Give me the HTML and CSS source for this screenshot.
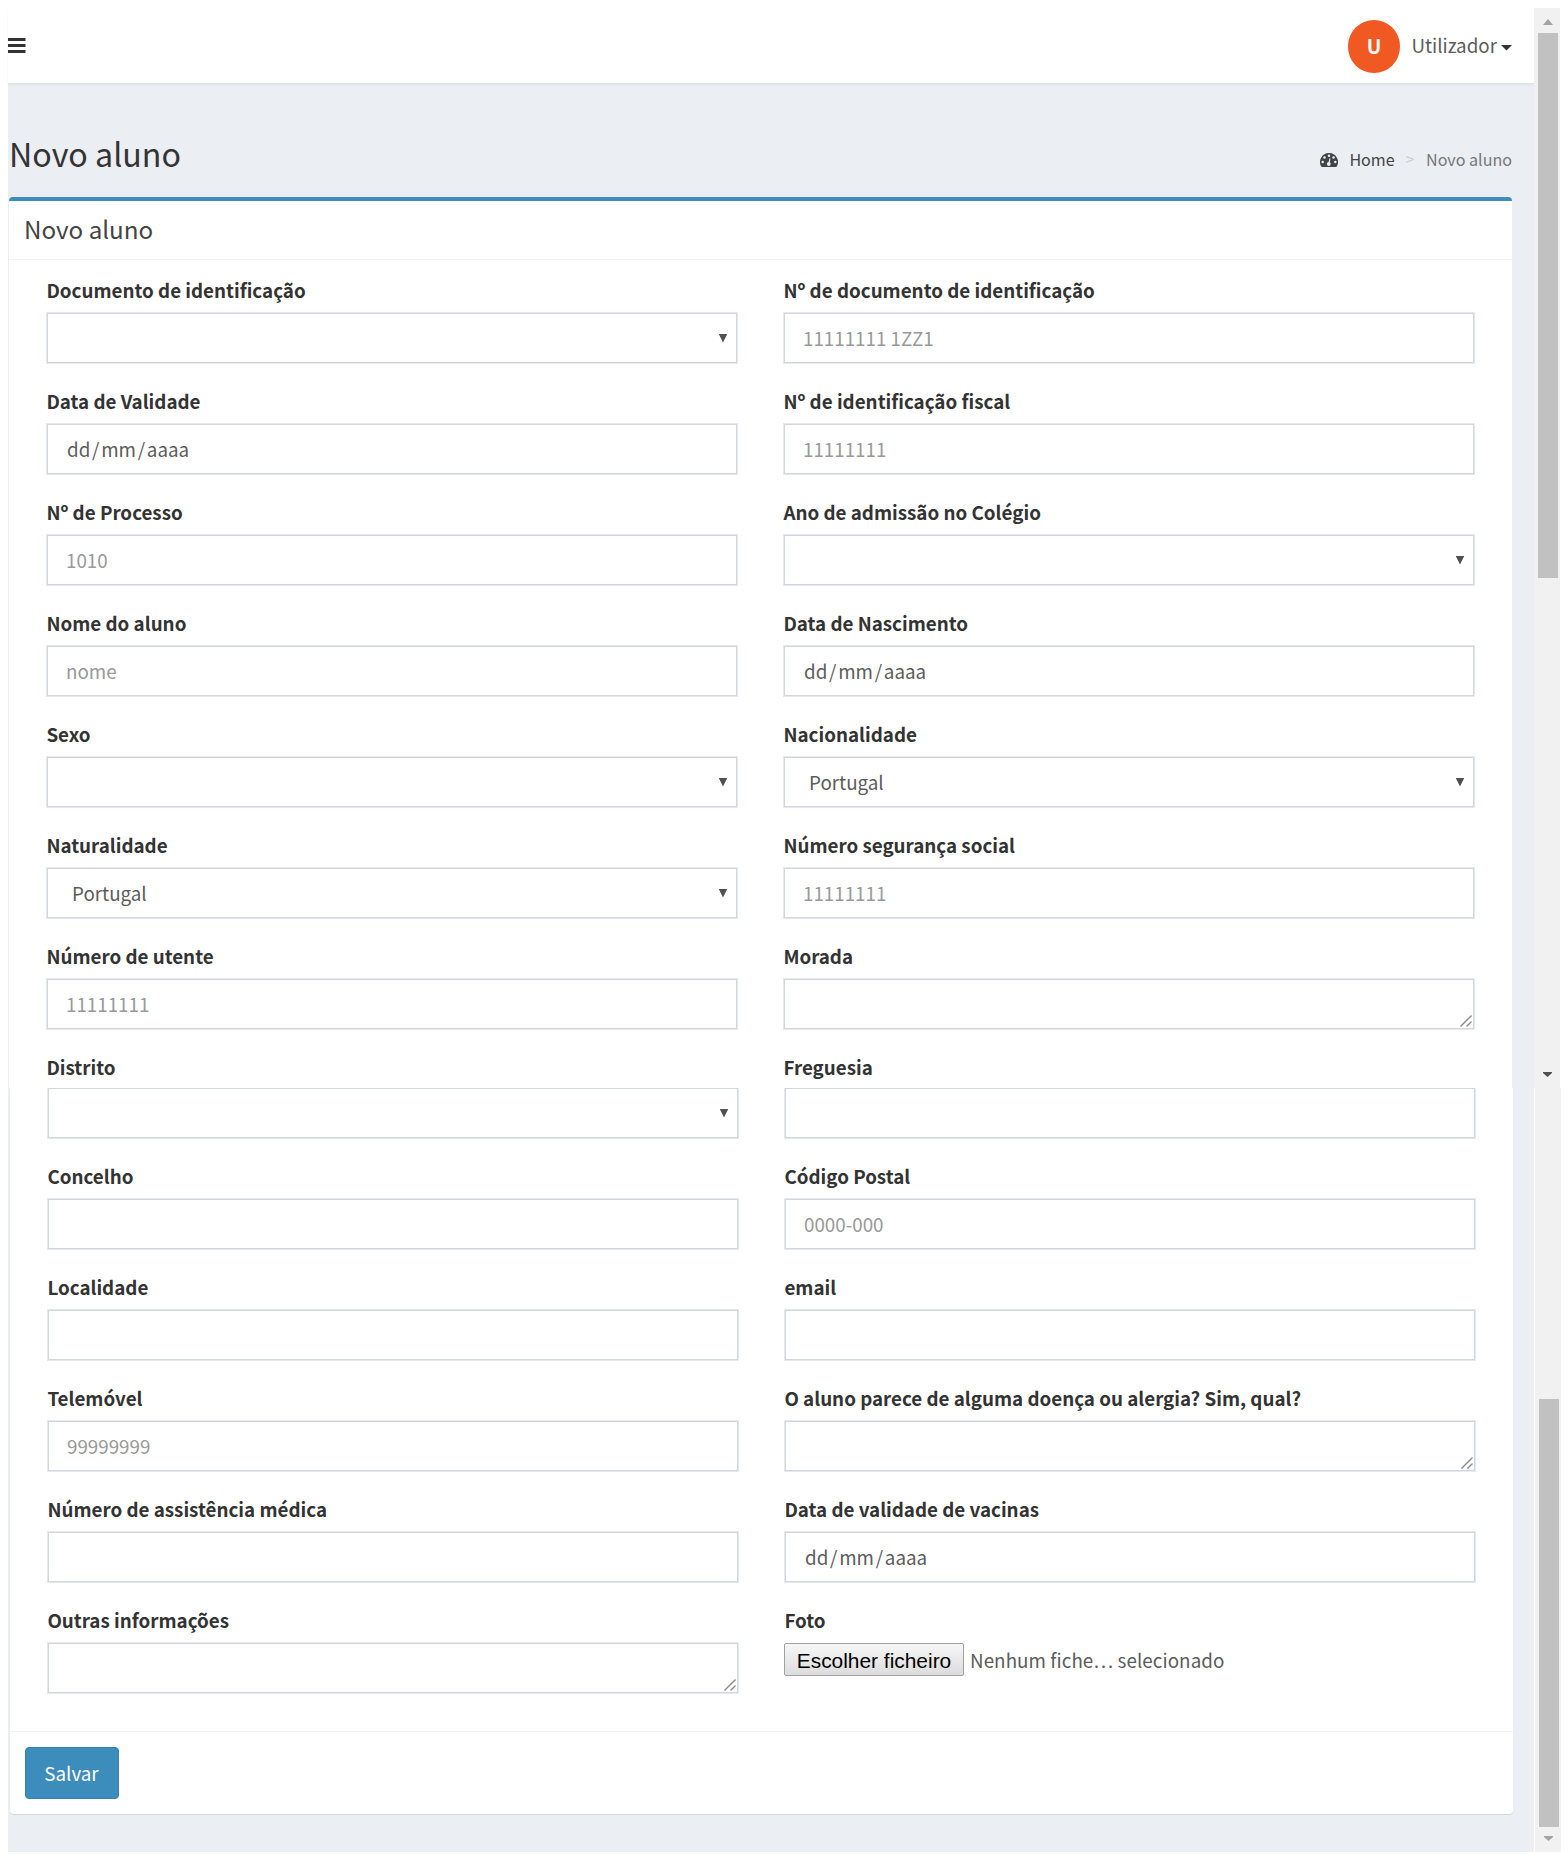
FILE: index.html
```html
<!DOCTYPE html>
<html lang="pt">
<head>
<meta charset="utf-8">
<title>Novo aluno</title>
<link rel="stylesheet" href="styles.css">
</head>
<body>
<div class="app">
  <div class="main">
    <header class="topbar">
      <svg class="menu" width="18" height="15" viewBox="0 0 18 15"><path d="M0 0h17.500v3H0zM0 6h17.500v3H0zM0 12h17.500v3H0z"/></svg>
      <div class="user">
        <span class="avatar">U</span>
        <span class="user-name">Utilizador</span>
        <svg class="caret" width="11" height="6" viewBox="0 0 11 6"><path d="M0 0h11L5.5 5.6z"/></svg>
      </div>
    </header>
    <div class="page-head">
      <h1>Novo aluno</h1>
      <nav class="crumbs">
        <svg class="gauge" width="18" height="14" viewBox="0 0 18 14"><path d="M9 0a9 9 0 0 0-7.6 13.8l.6.2h14l.6-.2A9 9 0 0 0 9 0z" fill="#444"/><g fill="#ebeef3"><circle cx="2.7" cy="9" r="1.25"/><circle cx="4.5" cy="4.6" r="1.25"/><circle cx="9" cy="2.7" r="1.25"/><circle cx="13.5" cy="4.6" r="1.25"/><circle cx="15.3" cy="9" r="1.25"/><circle cx="8.8" cy="11" r="1.9"/><path d="M8.2 10.5l1.3-5.3 1 .3-1 5.3z"/></g></svg>
        <span class="home">Home</span><span class="sep">&gt;</span><span class="here">Novo aluno</span>
      </nav>
    </div>
    <section class="box box-top">
      <h2>Novo aluno</h2>
      <div class="rows">
        <div class="row">
          <div class="field"><label>Documento de identificação</label><div class="control select"></div></div>
          <div class="field"><label>Nº de documento de identificação</label><div class="control hint">11111111 1ZZ1</div></div>
        </div>
        <div class="row">
          <div class="field"><label>Data de Validade</label><div class="control date">dd<span class="slash">/</span>mm<span class="slash">/</span>aaaa</div></div>
          <div class="field"><label>Nº de identificação fiscal</label><div class="control hint">11111111</div></div>
        </div>
        <div class="row">
          <div class="field"><label>Nº de Processo</label><div class="control hint">1010</div></div>
          <div class="field"><label>Ano de admissão no Colégio</label><div class="control select"></div></div>
        </div>
        <div class="row">
          <div class="field"><label>Nome do aluno</label><div class="control hint">nome</div></div>
          <div class="field"><label>Data de Nascimento</label><div class="control date">dd<span class="slash">/</span>mm<span class="slash">/</span>aaaa</div></div>
        </div>
        <div class="row">
          <div class="field"><label>Sexo</label><div class="control select"></div></div>
          <div class="field"><label>Nacionalidade</label><div class="control select">Portugal</div></div>
        </div>
        <div class="row">
          <div class="field"><label>Naturalidade</label><div class="control select">Portugal</div></div>
          <div class="field"><label>Número segurança social</label><div class="control hint">11111111</div></div>
        </div>
        <div class="row">
          <div class="field"><label>Número de utente</label><div class="control hint">11111111</div></div>
          <div class="field"><label>Morada</label><div class="control area"><svg class="grip" width="12" height="12" viewBox="0 0 12 12"><path d="M.5 11.5l11-11M6.500 11.500l5-5"/></svg></div></div>
        </div>
        <div class="row row-labels">
          <label>Distrito</label>
          <label>Freguesia</label>
        </div>
      </div>
    </section>
    <section class="box box-bottom">
      <div class="rows">
        <div class="row row-cut">
          <div class="control select"></div>
          <div class="control"></div>
        </div>
        <div class="row">
          <div class="field"><label>Concelho</label><div class="control"></div></div>
          <div class="field"><label>Código Postal</label><div class="control hint">0000-000</div></div>
        </div>
        <div class="row">
          <div class="field"><label>Localidade</label><div class="control"></div></div>
          <div class="field"><label>email</label><div class="control"></div></div>
        </div>
        <div class="row">
          <div class="field"><label>Telemóvel</label><div class="control hint">99999999</div></div>
          <div class="field"><label>O aluno parece de alguma doença ou alergia? Sim, qual?</label><div class="control area"><svg class="grip" width="12" height="12" viewBox="0 0 12 12"><path d="M.5 11.5l11-11M6.500 11.500l5-5"/></svg></div></div>
        </div>
        <div class="row">
          <div class="field"><label>Número de assistência médica</label><div class="control"></div></div>
          <div class="field"><label>Data de validade de vacinas</label><div class="control date">dd<span class="slash">/</span>mm<span class="slash">/</span>aaaa</div></div>
        </div>
        <div class="row">
          <div class="field"><label>Outras informações</label><div class="control area"><svg class="grip" width="12" height="12" viewBox="0 0 12 12"><path d="M.5 11.5l11-11M6.500 11.500l5-5"/></svg></div></div>
          <div class="field"><label>Foto</label><div class="file"><span class="file-button">Escolher ficheiro</span><span class="file-name">Nenhum fiche… selecionado</span></div></div>
        </div>
      </div>
      <footer><button class="save">Salvar</button></footer>
    </section>
  </div>
  <aside class="scroll">
    <div class="track track-top">
      <svg class="up" width="10" height="6" viewBox="0 0 10 6"><path d="M0 6h10L5 0z"/></svg>
      <div class="thumb"></div>
      <svg class="down" width="9" height="5" viewBox="0 0 9 5"><path d="M0 0h9v1L4.500 5 0 1z"/></svg>
    </div>
    <div class="track track-bottom">
      <div class="thumb"></div>
      <svg class="down" width="9" height="5" viewBox="0 0 9 5"><path d="M0 0h9v1L4.500 5 0 1z"/></svg>
    </div>
  </aside>
</div>
</body>
</html>
```
FILE: styles.css
```css
* { box-sizing: border-box; }
body {
  margin: 0;
  padding: 8px 7px 2px 8px;
  background: #fff;
  color: #333;
  font-family: "Noto Sans CJK JP", "Noto Sans CJK SC", sans-serif;
  font-size: 18.8px;
}
svg { display: block; flex: none; }
.app { display: flex; height: 1844px; }
.main { width: 1526px; background: #ebeef3; }

.topbar {
  display: flex;
  justify-content: space-between;
  align-items: flex-start;
  height: 75px;
  background: #fff;
  box-shadow: 0 2px 2px rgba(0, 0, 0, .05);
}
.menu { margin-top: 30px; fill: #333; }
.user { display: flex; align-items: center; margin: 12px 22px 0 0; }
.avatar {
  width: 52.5px;
  height: 52.5px;
  border-radius: 50%;
  background: #f05a22;
  color: #fff;
  font-weight: 700;
  font-size: 19.5px;
  line-height: 51px;
  text-align: center;
}
.user-name { margin-left: 11px; line-height: 48px; padding-bottom: 3px; color: #5c5c5c; }
.caret { margin: 4px 0 0 4px; fill: #333; }

.page-head { display: flex; justify-content: space-between; height: 114px; padding: 48px 22px 0 1px; }
h1 { margin: 0; font-size: 32.2px; font-weight: 400; line-height: 44px; }
.crumbs { display: flex; font-size: 16.1px; line-height: 56px; color: #444; }
.gauge { margin: 22px 11px 0 0; }
.sep { margin: 0 12px 0 11px; color: #ccc; font-size: 15px; }
.here { color: #777; }

.box { width: 1503px; background: #fff; box-shadow: 0 1px 1px rgba(0, 0, 0, .1); }
.box-top { height: 891px; margin-left: 1px; border-top: 4px solid #3c8dbc; border-radius: 4px 4px 0 0; box-shadow: none; }
.box-bottom { height: 726px; margin-left: 2px; border-radius: 0 0 4px 4px; }
h2 {
  height: 59px;
  margin: 0;
  padding-left: 15px;
  border-bottom: 1px solid #f4f4f4;
  font-size: 24.2px;
  font-weight: 400;
  line-height: 55px;
  color: #444;
}
.rows { padding-left: 37px; }
.box-top .rows { padding-top: 19px; }
.row { display: grid; grid-template-columns: 692px 692px; column-gap: 45px; height: 111px; }
.row-labels { height: 32px; }
.row-cut { height: 77px; }
label { display: block; height: 33px; padding-left: .4px; font-weight: 700; line-height: 22px; white-space: nowrap; }
.control {
  position: relative;
  height: 52px;
  border: 1px solid #e5e8ed;
  box-shadow: inset 0 0 0 1px #d2d6de;
  line-height: 50px;
  padding-left: 19px;
  color: #5c5c5c;
}
.row-cut .control { height: 51px; border-top: 0; }
.hint { color: #999; }
.date { padding-left: 20px; }
.slash { margin: 0 1.75px; }
.select { padding-left: 25px; }
.select::after {
  content: "";
  position: absolute;
  right: 9.5px;
  top: 20.5px;
  width: 9px;
  height: 9px;
  background: #505050;
  clip-path: polygon(0 0, 100% 0, 50% 100%);
}
.grip { position: absolute; right: 2px; bottom: 2px; fill: none; stroke: #888; stroke-width: 1.4; }
.file { display: flex; align-items: center; height: 33px; margin-top: 1px; }
.file-button {
  width: 180px;
  height: 33px;
  border: 1px solid #a0a0a0;
  border-radius: 2px;
  background: linear-gradient(#f7f7f7, #dcdcdc);
  color: #000;
  font: 20.900px/33px "Liberation Sans", sans-serif;
  text-align: center;
  white-space: nowrap;
}
.file-name { margin-left: 6px; line-height: 33px; padding-bottom: 1px; letter-spacing: .07px; color: #5c5c5c; white-space: nowrap; }

footer { height: 83px; margin-top: 11px; padding: 15px 0 0 15px; border-top: 1px solid #f4f4f4; }
.save {
  display: block;
  width: 94px;
  height: 52px;
  padding: 0 1px 0 0;
  border: 1px solid #367fa9;
  border-radius: 4px;
  background: #3c8dbc;
  color: #fff;
  font: 18.8px/48px "Noto Sans CJK JP", sans-serif;
}

.scroll { width: 27px; }
.track { display: flex; flex-direction: column; background: #f1f1f1; }
.track-top { width: 26px; height: 1080px; padding: 11px 0 0 4px; }
.track-bottom { width: 26px; height: 764px; margin-left: 1px; padding: 311px 0 0 4px; }
.thumb { width: 20px; background: #c1c1c1; }
.track-top .thumb { height: 545px; margin-top: 8px; }
.track-bottom .thumb { height: 428px; }
.up { margin-left: 5px; fill: #a3a3a3; }
.down { margin: auto 0 11px 5px; fill: #505050; }
.track-bottom .down { fill: #a3a3a3; }
```
